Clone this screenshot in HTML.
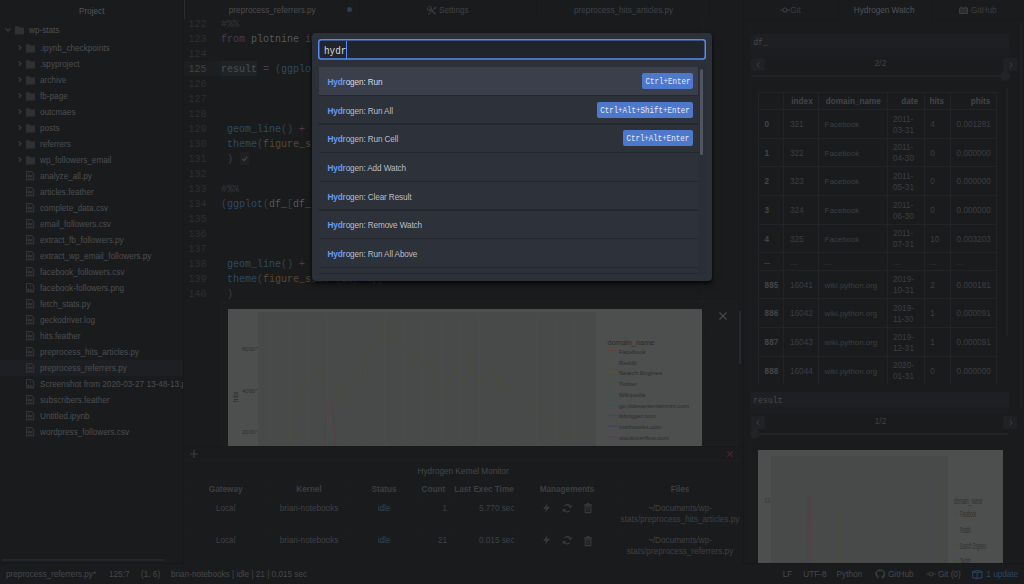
<!DOCTYPE html><html><head><meta charset="utf-8"><style>
html,body{margin:0;padding:0;width:1024px;height:584px;overflow:hidden;background:#1a1b1d;}
.t{position:absolute;white-space:pre;}
.r{position:absolute;}
svg{position:absolute;overflow:visible;}
</style></head><body>
<div class="r" style="left:0px;top:0px;width:183px;height:563px;background:#1a1b1d;"></div>
<div class="t" style="left:41.7px;width:100px;text-align:center;top:5.799999999999999px;line-height:12px;font-size:8.2px;color:#55585c;font-weight:normal;font-family:'Liberation Sans', sans-serif;">Project</div>
<div class="r" style="left:183px;top:0px;width:1px;height:563px;background:#161719;"></div>
<svg style="left:5px;top:28px" width="6" height="4"><path d="M0.5 0.5 L3 3 L5.5 0.5" stroke="#3a3c40" stroke-width="1.1" fill="none"/></svg>
<svg style="left:15px;top:25.8px" width="9" height="8.5"><path d="M0 0.3 H3.6 L4.6 1.5 H9 V8.4 H0 Z" fill="#2e3033"/></svg>
<div class="t" style="left:28.8px;top:24.200000000000003px;line-height:12px;font-size:9.347999999999999px;color:#4e5155;font-weight:normal;font-family:'Liberation Sans', sans-serif;transform:scaleX(0.877);transform-origin:0 50%;">wp-stats</div>
<svg style="left:17.6px;top:45.4px" width="4" height="6"><path d="M0.6 0.5 L3 2.8 L0.6 5.1" stroke="#3a3c40" stroke-width="1.1" fill="none"/></svg>
<svg style="left:26px;top:43.8px" width="9" height="8.5"><path d="M0 0.3 H3.6 L4.6 1.5 H9 V8.4 H0 Z" fill="#2e3033"/></svg>
<div class="t" style="left:40.2px;top:42.2px;line-height:12px;font-size:9.347999999999999px;color:#4b4e52;font-weight:normal;font-family:'Liberation Sans', sans-serif;transform:scaleX(0.877);transform-origin:0 50%;">.ipynb_checkpoints</div>
<svg style="left:17.6px;top:61.4px" width="4" height="6"><path d="M0.6 0.5 L3 2.8 L0.6 5.1" stroke="#3a3c40" stroke-width="1.1" fill="none"/></svg>
<svg style="left:26px;top:59.8px" width="9" height="8.5"><path d="M0 0.3 H3.6 L4.6 1.5 H9 V8.4 H0 Z" fill="#2e3033"/></svg>
<div class="t" style="left:40.2px;top:58.2px;line-height:12px;font-size:9.347999999999999px;color:#4b4e52;font-weight:normal;font-family:'Liberation Sans', sans-serif;transform:scaleX(0.877);transform-origin:0 50%;">.spyproject</div>
<svg style="left:17.6px;top:77.4px" width="4" height="6"><path d="M0.6 0.5 L3 2.8 L0.6 5.1" stroke="#3a3c40" stroke-width="1.1" fill="none"/></svg>
<svg style="left:26px;top:75.8px" width="9" height="8.5"><path d="M0 0.3 H3.6 L4.6 1.5 H9 V8.4 H0 Z" fill="#2e3033"/></svg>
<div class="t" style="left:40.2px;top:74.19999999999999px;line-height:12px;font-size:9.347999999999999px;color:#4b4e52;font-weight:normal;font-family:'Liberation Sans', sans-serif;transform:scaleX(0.877);transform-origin:0 50%;">archive</div>
<svg style="left:17.6px;top:93.4px" width="4" height="6"><path d="M0.6 0.5 L3 2.8 L0.6 5.1" stroke="#3a3c40" stroke-width="1.1" fill="none"/></svg>
<svg style="left:26px;top:91.8px" width="9" height="8.5"><path d="M0 0.3 H3.6 L4.6 1.5 H9 V8.4 H0 Z" fill="#2e3033"/></svg>
<div class="t" style="left:40.2px;top:90.19999999999999px;line-height:12px;font-size:9.347999999999999px;color:#4b4e52;font-weight:normal;font-family:'Liberation Sans', sans-serif;transform:scaleX(0.877);transform-origin:0 50%;">fb-page</div>
<svg style="left:17.6px;top:109.4px" width="4" height="6"><path d="M0.6 0.5 L3 2.8 L0.6 5.1" stroke="#3a3c40" stroke-width="1.1" fill="none"/></svg>
<svg style="left:26px;top:107.8px" width="9" height="8.5"><path d="M0 0.3 H3.6 L4.6 1.5 H9 V8.4 H0 Z" fill="#2e3033"/></svg>
<div class="t" style="left:40.2px;top:106.19999999999999px;line-height:12px;font-size:9.347999999999999px;color:#4b4e52;font-weight:normal;font-family:'Liberation Sans', sans-serif;transform:scaleX(0.877);transform-origin:0 50%;">outcmaes</div>
<svg style="left:17.6px;top:125.4px" width="4" height="6"><path d="M0.6 0.5 L3 2.8 L0.6 5.1" stroke="#3a3c40" stroke-width="1.1" fill="none"/></svg>
<svg style="left:26px;top:123.8px" width="9" height="8.5"><path d="M0 0.3 H3.6 L4.6 1.5 H9 V8.4 H0 Z" fill="#2e3033"/></svg>
<div class="t" style="left:40.2px;top:122.19999999999999px;line-height:12px;font-size:9.347999999999999px;color:#4b4e52;font-weight:normal;font-family:'Liberation Sans', sans-serif;transform:scaleX(0.877);transform-origin:0 50%;">posts</div>
<svg style="left:17.6px;top:141.4px" width="4" height="6"><path d="M0.6 0.5 L3 2.8 L0.6 5.1" stroke="#3a3c40" stroke-width="1.1" fill="none"/></svg>
<svg style="left:26px;top:139.8px" width="9" height="8.5"><path d="M0 0.3 H3.6 L4.6 1.5 H9 V8.4 H0 Z" fill="#2e3033"/></svg>
<div class="t" style="left:40.2px;top:138.2px;line-height:12px;font-size:9.347999999999999px;color:#4b4e52;font-weight:normal;font-family:'Liberation Sans', sans-serif;transform:scaleX(0.877);transform-origin:0 50%;">referrers</div>
<svg style="left:17.6px;top:157.4px" width="4" height="6"><path d="M0.6 0.5 L3 2.8 L0.6 5.1" stroke="#3a3c40" stroke-width="1.1" fill="none"/></svg>
<svg style="left:26px;top:155.8px" width="9" height="8.5"><path d="M0 0.3 H3.6 L4.6 1.5 H9 V8.4 H0 Z" fill="#2e3033"/></svg>
<div class="t" style="left:40.2px;top:154.2px;line-height:12px;font-size:9.347999999999999px;color:#4b4e52;font-weight:normal;font-family:'Liberation Sans', sans-serif;transform:scaleX(0.877);transform-origin:0 50%;">wp_followers_email</div>
<svg style="left:25.8px;top:171.4px" width="9" height="10"><path d="M0.55 0.55 H5.5 L7.65 2.7 V8.85 H0.55 Z" stroke="#313337" stroke-width="1.1" fill="none"/><rect x="1.4" y="1.8" width="2.8" height="0.9" fill="#313337"/><rect x="1.4" y="3.9" width="5" height="2.1" fill="#313337"/><rect x="1.4" y="6.9" width="5" height="0.8" fill="#313337"/></svg>
<div class="t" style="left:40px;top:170.2px;line-height:12px;font-size:9.347999999999999px;color:#4b4e52;font-weight:normal;font-family:'Liberation Sans', sans-serif;overflow:hidden;width:163.1px;transform:scaleX(0.877);transform-origin:0 50%;">analyze_all.py</div>
<svg style="left:25.8px;top:187.4px" width="9" height="10"><path d="M0.55 0.55 H5.5 L7.65 2.7 V8.85 H0.55 Z" stroke="#313337" stroke-width="1.1" fill="none"/><rect x="1.4" y="1.8" width="2.8" height="0.9" fill="#313337"/><rect x="1.4" y="3.9" width="5" height="2.1" fill="#313337"/><rect x="1.4" y="6.9" width="5" height="0.8" fill="#313337"/></svg>
<div class="t" style="left:40px;top:186.2px;line-height:12px;font-size:9.347999999999999px;color:#4b4e52;font-weight:normal;font-family:'Liberation Sans', sans-serif;overflow:hidden;width:163.1px;transform:scaleX(0.877);transform-origin:0 50%;">articles.feather</div>
<svg style="left:25.8px;top:203.4px" width="9" height="10"><path d="M0.55 0.55 H5.5 L7.65 2.7 V8.85 H0.55 Z" stroke="#313337" stroke-width="1.1" fill="none"/><rect x="1.4" y="1.8" width="2.8" height="0.9" fill="#313337"/><rect x="1.4" y="3.9" width="5" height="2.1" fill="#313337"/><rect x="1.4" y="6.9" width="5" height="0.8" fill="#313337"/></svg>
<div class="t" style="left:40px;top:202.2px;line-height:12px;font-size:9.347999999999999px;color:#4b4e52;font-weight:normal;font-family:'Liberation Sans', sans-serif;overflow:hidden;width:163.1px;transform:scaleX(0.877);transform-origin:0 50%;">complete_data.csv</div>
<svg style="left:25.8px;top:219.4px" width="9" height="10"><path d="M0.55 0.55 H5.5 L7.65 2.7 V8.85 H0.55 Z" stroke="#313337" stroke-width="1.1" fill="none"/><rect x="1.4" y="1.8" width="2.8" height="0.9" fill="#313337"/><rect x="1.4" y="3.9" width="5" height="2.1" fill="#313337"/><rect x="1.4" y="6.9" width="5" height="0.8" fill="#313337"/></svg>
<div class="t" style="left:40px;top:218.2px;line-height:12px;font-size:9.347999999999999px;color:#4b4e52;font-weight:normal;font-family:'Liberation Sans', sans-serif;overflow:hidden;width:163.1px;transform:scaleX(0.877);transform-origin:0 50%;">email_followers.csv</div>
<svg style="left:25.8px;top:235.4px" width="9" height="10"><path d="M0.55 0.55 H5.5 L7.65 2.7 V8.85 H0.55 Z" stroke="#313337" stroke-width="1.1" fill="none"/><rect x="1.4" y="1.8" width="2.8" height="0.9" fill="#313337"/><rect x="1.4" y="3.9" width="5" height="2.1" fill="#313337"/><rect x="1.4" y="6.9" width="5" height="0.8" fill="#313337"/></svg>
<div class="t" style="left:40px;top:234.2px;line-height:12px;font-size:9.347999999999999px;color:#4b4e52;font-weight:normal;font-family:'Liberation Sans', sans-serif;overflow:hidden;width:163.1px;transform:scaleX(0.877);transform-origin:0 50%;">extract_fb_followers.py</div>
<svg style="left:25.8px;top:251.4px" width="9" height="10"><path d="M0.55 0.55 H5.5 L7.65 2.7 V8.85 H0.55 Z" stroke="#313337" stroke-width="1.1" fill="none"/><rect x="1.4" y="1.8" width="2.8" height="0.9" fill="#313337"/><rect x="1.4" y="3.9" width="5" height="2.1" fill="#313337"/><rect x="1.4" y="6.9" width="5" height="0.8" fill="#313337"/></svg>
<div class="t" style="left:40px;top:250.2px;line-height:12px;font-size:9.347999999999999px;color:#4b4e52;font-weight:normal;font-family:'Liberation Sans', sans-serif;overflow:hidden;width:163.1px;transform:scaleX(0.877);transform-origin:0 50%;">extract_wp_email_followers.py</div>
<svg style="left:25.8px;top:267.4px" width="9" height="10"><path d="M0.55 0.55 H5.5 L7.65 2.7 V8.85 H0.55 Z" stroke="#313337" stroke-width="1.1" fill="none"/><rect x="1.4" y="1.8" width="2.8" height="0.9" fill="#313337"/><rect x="1.4" y="3.9" width="5" height="2.1" fill="#313337"/><rect x="1.4" y="6.9" width="5" height="0.8" fill="#313337"/></svg>
<div class="t" style="left:40px;top:266.20000000000005px;line-height:12px;font-size:9.347999999999999px;color:#4b4e52;font-weight:normal;font-family:'Liberation Sans', sans-serif;overflow:hidden;width:163.1px;transform:scaleX(0.877);transform-origin:0 50%;">facebook_followers.csv</div>
<svg style="left:25.8px;top:283.4px" width="9" height="10"><path d="M0.55 0.55 H5.5 L7.65 2.7 V8.85 H0.55 Z" stroke="#313337" stroke-width="1.1" fill="none"/><circle cx="4.4" cy="3.1" r="0.85" fill="#313337"/><path d="M1.1 7.6 L2.2 4.8 L3.3 6.6 L4.5 5.6 L6.9 7.6 Z" fill="#313337"/><rect x="0.6" y="7.4" width="6.8" height="1.5" fill="#313337"/></svg>
<div class="t" style="left:40px;top:282.20000000000005px;line-height:12px;font-size:9.347999999999999px;color:#4b4e52;font-weight:normal;font-family:'Liberation Sans', sans-serif;overflow:hidden;width:163.1px;transform:scaleX(0.877);transform-origin:0 50%;">facebook-followers.png</div>
<svg style="left:25.8px;top:299.4px" width="9" height="10"><path d="M0.55 0.55 H5.5 L7.65 2.7 V8.85 H0.55 Z" stroke="#313337" stroke-width="1.1" fill="none"/><rect x="1.4" y="1.8" width="2.8" height="0.9" fill="#313337"/><rect x="1.4" y="3.9" width="5" height="2.1" fill="#313337"/><rect x="1.4" y="6.9" width="5" height="0.8" fill="#313337"/></svg>
<div class="t" style="left:40px;top:298.20000000000005px;line-height:12px;font-size:9.347999999999999px;color:#4b4e52;font-weight:normal;font-family:'Liberation Sans', sans-serif;overflow:hidden;width:163.1px;transform:scaleX(0.877);transform-origin:0 50%;">fetch_stats.py</div>
<svg style="left:25.8px;top:315.4px" width="9" height="10"><path d="M0.55 0.55 H5.5 L7.65 2.7 V8.85 H0.55 Z" stroke="#313337" stroke-width="1.1" fill="none"/><rect x="1.4" y="1.8" width="2.8" height="0.9" fill="#313337"/><rect x="1.4" y="3.9" width="5" height="2.1" fill="#313337"/><rect x="1.4" y="6.9" width="5" height="0.8" fill="#313337"/></svg>
<div class="t" style="left:40px;top:314.20000000000005px;line-height:12px;font-size:9.347999999999999px;color:#4b4e52;font-weight:normal;font-family:'Liberation Sans', sans-serif;overflow:hidden;width:163.1px;transform:scaleX(0.877);transform-origin:0 50%;">geckodriver.log</div>
<svg style="left:25.8px;top:331.4px" width="9" height="10"><path d="M0.55 0.55 H5.5 L7.65 2.7 V8.85 H0.55 Z" stroke="#313337" stroke-width="1.1" fill="none"/><rect x="1.4" y="1.8" width="2.8" height="0.9" fill="#313337"/><rect x="1.4" y="3.9" width="5" height="2.1" fill="#313337"/><rect x="1.4" y="6.9" width="5" height="0.8" fill="#313337"/></svg>
<div class="t" style="left:40px;top:330.20000000000005px;line-height:12px;font-size:9.347999999999999px;color:#4b4e52;font-weight:normal;font-family:'Liberation Sans', sans-serif;overflow:hidden;width:163.1px;transform:scaleX(0.877);transform-origin:0 50%;">hits.feather</div>
<svg style="left:25.8px;top:347.4px" width="9" height="10"><path d="M0.55 0.55 H5.5 L7.65 2.7 V8.85 H0.55 Z" stroke="#313337" stroke-width="1.1" fill="none"/><rect x="1.4" y="1.8" width="2.8" height="0.9" fill="#313337"/><rect x="1.4" y="3.9" width="5" height="2.1" fill="#313337"/><rect x="1.4" y="6.9" width="5" height="0.8" fill="#313337"/></svg>
<div class="t" style="left:40px;top:346.20000000000005px;line-height:12px;font-size:9.347999999999999px;color:#4b4e52;font-weight:normal;font-family:'Liberation Sans', sans-serif;overflow:hidden;width:163.1px;transform:scaleX(0.877);transform-origin:0 50%;">preprocess_hits_articles.py</div>
<div class="r" style="left:0px;top:360px;width:183px;height:16px;background:#1e1f22;"></div>
<svg style="left:25.8px;top:363.4px" width="9" height="10"><path d="M0.55 0.55 H5.5 L7.65 2.7 V8.85 H0.55 Z" stroke="#313337" stroke-width="1.1" fill="none"/><rect x="1.4" y="1.8" width="2.8" height="0.9" fill="#313337"/><rect x="1.4" y="3.9" width="5" height="2.1" fill="#313337"/><rect x="1.4" y="6.9" width="5" height="0.8" fill="#313337"/></svg>
<div class="t" style="left:40px;top:362.20000000000005px;line-height:12px;font-size:9.347999999999999px;color:#4b4e52;font-weight:normal;font-family:'Liberation Sans', sans-serif;overflow:hidden;width:163.1px;transform:scaleX(0.877);transform-origin:0 50%;">preprocess_referrers.py</div>
<svg style="left:25.8px;top:379.4px" width="9" height="10"><path d="M0.55 0.55 H5.5 L7.65 2.7 V8.85 H0.55 Z" stroke="#313337" stroke-width="1.1" fill="none"/><circle cx="4.4" cy="3.1" r="0.85" fill="#313337"/><path d="M1.1 7.6 L2.2 4.8 L3.3 6.6 L4.5 5.6 L6.9 7.6 Z" fill="#313337"/><rect x="0.6" y="7.4" width="6.8" height="1.5" fill="#313337"/></svg>
<div class="t" style="left:40px;top:378.20000000000005px;line-height:12px;font-size:9.347999999999999px;color:#4b4e52;font-weight:normal;font-family:'Liberation Sans', sans-serif;overflow:hidden;width:163.1px;transform:scaleX(0.877);transform-origin:0 50%;">Screenshot from 2020-03-27 13-48-13.png</div>
<svg style="left:25.8px;top:395.4px" width="9" height="10"><path d="M0.55 0.55 H5.5 L7.65 2.7 V8.85 H0.55 Z" stroke="#313337" stroke-width="1.1" fill="none"/><rect x="1.4" y="1.8" width="2.8" height="0.9" fill="#313337"/><rect x="1.4" y="3.9" width="5" height="2.1" fill="#313337"/><rect x="1.4" y="6.9" width="5" height="0.8" fill="#313337"/></svg>
<div class="t" style="left:40px;top:394.20000000000005px;line-height:12px;font-size:9.347999999999999px;color:#4b4e52;font-weight:normal;font-family:'Liberation Sans', sans-serif;overflow:hidden;width:163.1px;transform:scaleX(0.877);transform-origin:0 50%;">subscribers.feather</div>
<svg style="left:25.8px;top:411.4px" width="9" height="10"><path d="M0.55 0.55 H5.5 L7.65 2.7 V8.85 H0.55 Z" stroke="#313337" stroke-width="1.1" fill="none"/><rect x="1.4" y="1.8" width="2.8" height="0.9" fill="#313337"/><rect x="1.4" y="3.9" width="5" height="2.1" fill="#313337"/><rect x="1.4" y="6.9" width="5" height="0.8" fill="#313337"/></svg>
<div class="t" style="left:40px;top:410.20000000000005px;line-height:12px;font-size:9.347999999999999px;color:#4b4e52;font-weight:normal;font-family:'Liberation Sans', sans-serif;overflow:hidden;width:163.1px;transform:scaleX(0.877);transform-origin:0 50%;">Untitled.ipynb</div>
<svg style="left:25.8px;top:427.4px" width="9" height="10"><path d="M0.55 0.55 H5.5 L7.65 2.7 V8.85 H0.55 Z" stroke="#313337" stroke-width="1.1" fill="none"/><rect x="1.4" y="1.8" width="2.8" height="0.9" fill="#313337"/><rect x="1.4" y="3.9" width="5" height="2.1" fill="#313337"/><rect x="1.4" y="6.9" width="5" height="0.8" fill="#313337"/></svg>
<div class="t" style="left:40px;top:426.20000000000005px;line-height:12px;font-size:9.347999999999999px;color:#4b4e52;font-weight:normal;font-family:'Liberation Sans', sans-serif;overflow:hidden;width:163.1px;transform:scaleX(0.877);transform-origin:0 50%;">wordpress_followers.csv</div>
<div class="r" style="left:2px;top:558.7px;width:163px;height:2.4px;background:#24272b;border-radius:1px;"></div>
<div class="r" style="left:0px;top:563px;width:1024px;height:21px;background:#1a1b1d;"></div>
<div class="r" style="left:0px;top:563px;width:1024px;height:1px;background:#161719;"></div>
<div class="t" style="left:6px;top:569.1px;line-height:12px;font-size:8.2px;color:#45484c;font-weight:normal;font-family:'Liberation Sans', sans-serif;">preprocess_referrers.py*</div>
<div class="t" style="left:109px;top:569.1px;line-height:12px;font-size:8.2px;color:#45484c;font-weight:normal;font-family:'Liberation Sans', sans-serif;">125:7</div>
<div class="t" style="left:141px;top:569.1px;line-height:12px;font-size:8.2px;color:#45484c;font-weight:normal;font-family:'Liberation Sans', sans-serif;">(1, 6)</div>
<div class="t" style="left:171px;top:569.1px;line-height:12px;font-size:8.2px;color:#45484c;font-weight:normal;font-family:'Liberation Sans', sans-serif;">brian-notebooks | idle | 21 | 0.015 sec</div>
<div class="t" style="left:782.7px;top:569.1px;line-height:12px;font-size:8.2px;color:#45484c;font-weight:normal;font-family:'Liberation Sans', sans-serif;">LF</div>
<div class="t" style="left:803.3px;top:569.1px;line-height:12px;font-size:8.2px;color:#45484c;font-weight:normal;font-family:'Liberation Sans', sans-serif;">UTF-8</div>
<div class="t" style="left:836.6px;top:569.1px;line-height:12px;font-size:8.2px;color:#45484c;font-weight:normal;font-family:'Liberation Sans', sans-serif;">Python</div>
<div class="t" style="left:888px;top:569.1px;line-height:12px;font-size:8.2px;color:#45484c;font-weight:normal;font-family:'Liberation Sans', sans-serif;">GitHub</div>
<div class="t" style="left:937.9px;top:569.1px;line-height:12px;font-size:8.2px;color:#45484c;font-weight:normal;font-family:'Liberation Sans', sans-serif;">Git (0)</div>
<div class="t" style="left:986.3px;top:569.1px;line-height:12px;font-size:8.2px;color:#2c4460;font-weight:normal;font-family:'Liberation Sans', sans-serif;">1 update</div>
<svg style="left:874.6px;top:568.8px" width="11" height="10"><path d="M5.3 0.2 C2.4 0.2 0.2 2.4 0.2 5.1 C0.2 7.3 1.6 9.2 3.6 9.8 C3.9 9.9 4 9.7 4 9.6 V8.7 C2.6 9 2.3 8 2.3 8 C2.1 7.4 1.7 7.2 1.7 7.2 C1.2 6.9 1.7 6.9 1.7 6.9 C2.2 6.9 2.5 7.4 2.5 7.4 C3 8.2 3.7 8 4 7.8 C4.1 7.5 4.2 7.2 4.4 7.1 C3.2 7 2 6.5 2 4.6 C2 4 2.2 3.6 2.5 3.2 C2.5 3.1 2.3 2.6 2.6 1.9 C2.6 1.9 3 1.8 4 2.4 C4.4 2.3 4.9 2.2 5.3 2.2 C5.7 2.2 6.2 2.3 6.6 2.4 C7.6 1.8 8 1.9 8 1.9 C8.3 2.6 8.1 3.1 8.1 3.2 C8.4 3.6 8.6 4 8.6 4.6 C8.6 6.5 7.4 7 6.2 7.1 C6.4 7.3 6.6 7.6 6.6 8.1 V9.6 C6.6 9.7 6.7 9.9 7 9.8 C9 9.2 10.4 7.3 10.4 5.1 C10.4 2.4 8.2 0.2 5.3 0.2 Z" fill="#37393d"/></svg>
<svg style="left:925.5px;top:570.6px" width="10" height="6"><circle cx="5" cy="3" r="2" stroke="#38393d" stroke-width="1.2" fill="none"/><path d="M0 3 H3 M7 3 H10" stroke="#38393d" stroke-width="1.2"/></svg>
<svg style="left:971.6px;top:569.6px" width="11" height="9"><path d="M0.6 1.6 L5.2 0.4 L10 1.6 V7.6 L5.2 8.6 L0.6 7.6 Z M0.6 1.6 L5.2 3 L10 1.6 M5.2 3 V8.6" stroke="#2a3f5a" stroke-width="1.1" fill="none"/></svg>
<div class="r" style="left:184px;top:0px;width:559px;height:19px;background:#1a1b1d;"></div>
<div class="r" style="left:359px;top:19px;width:384px;height:1px;background:#161719;"></div>
<div class="r" style="left:183.5px;top:0px;width:1.4px;height:19px;background:#2a2c30;"></div>
<div class="r" style="left:358.8px;top:0px;width:1px;height:19px;background:#17181a;"></div>
<div class="r" style="left:536px;top:0px;width:1px;height:19px;background:#17181a;"></div>
<div class="r" style="left:709px;top:0px;width:1px;height:19px;background:#17181a;"></div>
<div class="t" style="left:228.8px;top:5.4px;line-height:12px;font-size:8.2px;color:#4a4d51;font-weight:normal;font-family:'Liberation Sans', sans-serif;">preprocess_referrers.py</div>
<div class="r" style="left:347.1px;top:7.3px;width:5px;height:5px;border-radius:50%;background:#2a3f57"></div>
<svg style="left:426.7px;top:5.6px" width="10" height="9"><path d="M2.6 2.6 L8.6 8.4" stroke="#36383c" stroke-width="1.7" fill="none"/><path d="M0.6 1.6 A2 2 0 0 0 3.4 4.2 M1.6 0.6 A2 2 0 0 1 4.2 3.4" stroke="#36383c" stroke-width="1.2" fill="none"/><path d="M9.2 0.8 L1 8.4" stroke="#36383c" stroke-width="1.1" fill="none"/><path d="M7.6 0.6 L9.4 2.4 L8.2 3.2 L6.8 1.8 Z" fill="#36383c"/></svg>
<div class="t" style="left:439px;top:5.4px;line-height:12px;font-size:8.2px;color:#3f4246;font-weight:normal;font-family:'Liberation Sans', sans-serif;">Settings</div>
<div class="t" style="left:574px;top:5.4px;line-height:12px;font-size:8.2px;color:#3f4246;font-weight:normal;font-family:'Liberation Sans', sans-serif;">preprocess_hits_articles.py</div>
<div class="r" style="left:184px;top:19px;width:559px;height:427px;background:#1a1b1d;"></div>
<div class="r" style="left:184px;top:61.3px;width:37px;height:15.1px;background:#1c1e20;"></div>
<div class="r" style="left:701.5px;top:19px;width:1px;height:282px;background:#1e1f22;"></div>
<div class="t" style="left:166.5px;width:40px;text-align:right;top:17.3px;line-height:15px;font-size:10px;color:#2c2e32;font-weight:normal;font-family:'Liberation Mono', monospace;">122</div>
<div class="t" style="left:166.5px;width:40px;text-align:right;top:32.300000000000004px;line-height:15px;font-size:10px;color:#2c2e32;font-weight:normal;font-family:'Liberation Mono', monospace;">123</div>
<div class="t" style="left:166.5px;width:40px;text-align:right;top:47.300000000000004px;line-height:15px;font-size:10px;color:#2c2e32;font-weight:normal;font-family:'Liberation Mono', monospace;">124</div>
<div class="t" style="left:166.5px;width:40px;text-align:right;top:62.3px;line-height:15px;font-size:10px;color:#3f4246;font-weight:normal;font-family:'Liberation Mono', monospace;">125</div>
<div class="t" style="left:166.5px;width:40px;text-align:right;top:77.3px;line-height:15px;font-size:10px;color:#2c2e32;font-weight:normal;font-family:'Liberation Mono', monospace;">126</div>
<div class="t" style="left:166.5px;width:40px;text-align:right;top:92.3px;line-height:15px;font-size:10px;color:#2c2e32;font-weight:normal;font-family:'Liberation Mono', monospace;">127</div>
<div class="t" style="left:166.5px;width:40px;text-align:right;top:107.3px;line-height:15px;font-size:10px;color:#2c2e32;font-weight:normal;font-family:'Liberation Mono', monospace;">128</div>
<div class="t" style="left:166.5px;width:40px;text-align:right;top:122.3px;line-height:15px;font-size:10px;color:#2c2e32;font-weight:normal;font-family:'Liberation Mono', monospace;">129</div>
<div class="t" style="left:166.5px;width:40px;text-align:right;top:137.29999999999998px;line-height:15px;font-size:10px;color:#2c2e32;font-weight:normal;font-family:'Liberation Mono', monospace;">130</div>
<div class="t" style="left:166.5px;width:40px;text-align:right;top:152.29999999999998px;line-height:15px;font-size:10px;color:#2c2e32;font-weight:normal;font-family:'Liberation Mono', monospace;">131</div>
<div class="t" style="left:166.5px;width:40px;text-align:right;top:167.29999999999998px;line-height:15px;font-size:10px;color:#2c2e32;font-weight:normal;font-family:'Liberation Mono', monospace;">132</div>
<div class="t" style="left:166.5px;width:40px;text-align:right;top:182.29999999999998px;line-height:15px;font-size:10px;color:#2c2e32;font-weight:normal;font-family:'Liberation Mono', monospace;">133</div>
<div class="t" style="left:166.5px;width:40px;text-align:right;top:197.29999999999998px;line-height:15px;font-size:10px;color:#2c2e32;font-weight:normal;font-family:'Liberation Mono', monospace;">134</div>
<div class="t" style="left:166.5px;width:40px;text-align:right;top:212.29999999999998px;line-height:15px;font-size:10px;color:#2c2e32;font-weight:normal;font-family:'Liberation Mono', monospace;">135</div>
<div class="t" style="left:166.5px;width:40px;text-align:right;top:227.29999999999998px;line-height:15px;font-size:10px;color:#2c2e32;font-weight:normal;font-family:'Liberation Mono', monospace;">136</div>
<div class="t" style="left:166.5px;width:40px;text-align:right;top:242.29999999999998px;line-height:15px;font-size:10px;color:#2c2e32;font-weight:normal;font-family:'Liberation Mono', monospace;">137</div>
<div class="t" style="left:166.5px;width:40px;text-align:right;top:257.3px;line-height:15px;font-size:10px;color:#2c2e32;font-weight:normal;font-family:'Liberation Mono', monospace;">138</div>
<div class="t" style="left:166.5px;width:40px;text-align:right;top:272.3px;line-height:15px;font-size:10px;color:#2c2e32;font-weight:normal;font-family:'Liberation Mono', monospace;">139</div>
<div class="t" style="left:166.5px;width:40px;text-align:right;top:287.3px;line-height:15px;font-size:10px;color:#2c2e32;font-weight:normal;font-family:'Liberation Mono', monospace;">140</div>
<div class="t" style="left:221px;top:17.3px;line-height:15px;font-size:10px;font-family:'Liberation Mono', monospace;"><span style="color:#35373b">#%%</span></div>
<div class="t" style="left:221px;top:32.3px;line-height:15px;font-size:10px;font-family:'Liberation Mono', monospace;"><span style="color:#4b3a55">from</span><span style="color:#55585c"> plotnine </span><span style="color:#4b3a55">import</span><span style="color:#55585c"> *</span></div>
<div class="r" style="left:221px;top:61px;width:36.2px;height:15px;background:#1f2326;"></div>
<div class="t" style="left:221px;top:62.3px;line-height:15px;font-size:10px;font-family:'Liberation Mono', monospace;"><span style="color:#4a4d50">result</span><span style="color:#55585c"> </span><span style="color:#4b3a55">=</span><span style="color:#55585c"> </span><span style="color:#3d4044">(</span><span style="color:#2f4a63">ggplot</span></div>
<div class="t" style="left:221px;top:122.3px;line-height:15px;font-size:10px;font-family:'Liberation Mono', monospace;"><span style="color:#55585c"> </span><span style="color:#2f4a63">geom_line</span><span style="color:#3d4044">()</span><span style="color:#55585c"> </span><span style="color:#4b3a55">+</span></div>
<div class="t" style="left:221px;top:137.3px;line-height:15px;font-size:10px;font-family:'Liberation Mono', monospace;"><span style="color:#55585c"> </span><span style="color:#2f4a63">theme</span><span style="color:#3d4044">(</span><span style="color:#5a4630">figure_size</span></div>
<div class="t" style="left:221px;top:152.3px;line-height:15px;font-size:10px;font-family:'Liberation Mono', monospace;"><span style="color:#55585c"> </span><span style="color:#3d4044">)</span></div>
<div class="r" style="left:239.5px;top:152px;width:9px;height:13px;background:#1e2023;border-radius:1.5px;"></div>
<svg style="left:240.5px;top:155px" width="7" height="7"><path d="M1 3.8 L2.9 5.6 L6.2 1.6" stroke="#45484c" stroke-width="1.1" fill="none"/></svg>
<div class="t" style="left:221px;top:182.3px;line-height:15px;font-size:10px;font-family:'Liberation Mono', monospace;"><span style="color:#35373b">#%%</span></div>
<div class="t" style="left:221px;top:197.3px;line-height:15px;font-size:10px;font-family:'Liberation Mono', monospace;"><span style="color:#3d4044">(</span><span style="color:#2f4a63">ggplot</span><span style="color:#3d4044">(</span><span style="color:#55585c">df_</span><span style="color:#3d4044">[</span><span style="color:#55585c">df_</span><span style="color:#3d4044">.</span><span style="color:#55585c">domain_name</span></div>
<div class="t" style="left:221px;top:257.3px;line-height:15px;font-size:10px;font-family:'Liberation Mono', monospace;"><span style="color:#55585c"> </span><span style="color:#2f4a63">geom_line</span><span style="color:#3d4044">()</span><span style="color:#55585c"> </span><span style="color:#4b3a55">+</span></div>
<div class="t" style="left:221px;top:272.3px;line-height:15px;font-size:10px;font-family:'Liberation Mono', monospace;"><span style="color:#55585c"> </span><span style="color:#2f4a63">theme</span><span style="color:#3d4044">(</span><span style="color:#5a4630">figure_size</span><span style="color:#4b3a55">=</span><span style="color:#3d4044">(</span><span style="color:#5a4630">10</span><span style="color:#3d4044">,</span><span style="color:#55585c"> </span><span style="color:#5a4630">4</span><span style="color:#3d4044">))</span></div>
<div class="t" style="left:221px;top:287.3px;line-height:15px;font-size:10px;font-family:'Liberation Mono', monospace;"><span style="color:#55585c"> </span><span style="color:#3d4044">)</span></div>
<div class="r" style="left:221.4px;top:301px;width:516px;height:145px;background:#1b1c1e;box-shadow:inset 0 0 0 1px #1d1e21;"></div>
<div class="r" style="left:708.7px;top:301px;width:28.3px;height:28.7px;background:transparent;box-shadow:inset 0 0 0 1px #1d1e21;"></div>
<div class="r" style="left:708.7px;top:301px;width:1px;height:145px;background:#1d1e21;"></div>
<svg style="left:718.6px;top:312px" width="8" height="8"><path d="M0.5 0.5 L7.5 7.5 M7.5 0.5 L0.5 7.5" stroke="#45474b" stroke-width="1.2" fill="none"/></svg>
<div class="r" style="left:739px;top:310.5px;width:1.6px;height:53.5px;background:#26282c;"></div>
<div class="r" style="left:228px;top:308.5px;width:474px;height:137.5px;background:#4d4e4e;overflow:hidden">
<div class="r" style="left:30px;top:3.5px;width:337.6px;height:200px;background:#484949"></div>
<svg style="left:0;top:0" width="474" height="138"><path d="M42.5 4.5 V140" stroke="#4c4d4d" stroke-width="0.7"/><path d="M61.5 4.5 V140" stroke="#4c4d4d" stroke-width="0.7"/><path d="M80.5 4.5 V140" stroke="#4c4d4d" stroke-width="0.7"/><path d="M99.5 4.5 V140" stroke="#4c4d4d" stroke-width="0.7"/><path d="M118.5 4.5 V140" stroke="#4c4d4d" stroke-width="0.7"/><path d="M137.5 4.5 V140" stroke="#4c4d4d" stroke-width="0.7"/><path d="M156.5 4.5 V140" stroke="#4c4d4d" stroke-width="0.7"/><path d="M175.5 4.5 V140" stroke="#4c4d4d" stroke-width="0.7"/><path d="M194.5 4.5 V140" stroke="#4c4d4d" stroke-width="0.7"/><path d="M213.5 4.5 V140" stroke="#4c4d4d" stroke-width="0.7"/><path d="M232.5 4.5 V140" stroke="#4c4d4d" stroke-width="0.7"/><path d="M251.5 4.5 V140" stroke="#4c4d4d" stroke-width="0.7"/><path d="M270.5 4.5 V140" stroke="#4c4d4d" stroke-width="0.7"/><path d="M289.5 4.5 V140" stroke="#4c4d4d" stroke-width="0.7"/><path d="M308.5 4.5 V140" stroke="#4c4d4d" stroke-width="0.7"/><path d="M327.5 4.5 V140" stroke="#4c4d4d" stroke-width="0.7"/><path d="M346.5 4.5 V140" stroke="#4c4d4d" stroke-width="0.7"/><path d="M365.5 4.5 V140" stroke="#4c4d4d" stroke-width="0.7"/><path d="M30 38.7 H367.6" stroke="#4c4d4d" stroke-width="0.8"/><path d="M30 80.4 H367.6" stroke="#4c4d4d" stroke-width="0.8"/><path d="M30 122 H367.6" stroke="#4c4d4d" stroke-width="0.8"/><path d="M28 38.5 H30" stroke="#2f3030" stroke-width="0.6"/><path d="M28 80.4 H30" stroke="#2f3030" stroke-width="0.6"/><path d="M28 122 H30" stroke="#2f3030" stroke-width="0.6"/><path d="M61.7 137.4 L64.3 96.8 L66.4 95.6 L68.9 93.0 L71.5 87.1 L73.6 68.6 L75.4 67.3 L77.9 68.1 L80.0 82.7 L83.1 68.1 L85.6 67.3 L87.4 62.2 L89.5 57.5 L92.1 60.9 L94.1 68.6 L95.9 80.1 L99.8 93.0 L102.3 94.3 L104.9 95.6 L107.5 91.7 L111.9 72.4 L115.2 89.1 L118.3 96.8 L121.6 78.9 L124.2 76.3 L127.5 68.1 L130.6 64.7 L134.5 62.2 L137.8 51.9 L140.4 41.6 L143.5 45.5 L146.0 37.7 L149.1 24.9 L152.4 13.3 L155.8 37.7 L158.9 32.6 L162.0 30.0 L165.3 14.6 L168.6 24.9 L171.7 33.9 L176.9 44.2 L181.5 54.4 L185.1 50.6 L188.4 37.2 L191.0 37.2 L194.3 57.0 L197.4 52.4 L200.8 57.8 L203.8 48.0 L207.2 69.9 L210.3 71.2 L216.7 84.0 L220.0 80.1 L225.7 62.2 L229.5 60.9 L232.1 76.3 L237.0 71.2 L232.0 76.2 L234.6 72.4 L237.1 66.0 L241.5 41.6 L244.8 60.8 L247.4 66.0 L253.8 73.7 L257.7 75.7 L264.1 55.7 L270.5 81.4 L273.1 71.1 L276.9 77.5 L279.5 78.3 L283.4 84.5 L285.9 85.2 L288.5 96.8 L292.3 100.6 L296.2 98.1 L298.8 99.9 L302.6 96.3 L306.5 98.8 L308.5 108.3 L310.3 104.5 L314.2 102.4 L318.0 100.6 L321.9 108.3 L327.0 121.2 L330.9 124.5 L334.7 127.6 L337.3 125.0 L341.1 130.2 L345.0 132.2 L348.8 136.6 L351.4 137.4 L352.7 119.9" stroke="#4c4d39" stroke-width="0.85" fill="none"/><path d="M96.7 138.0 L97.7 114.8 L99.3 93.8 L101.1 92.7 L102.9 93.2 L104.4 94.8 L105.9 114.8 L107.5 138.0" stroke="#563f46" stroke-width="0.9" fill="none"/><path d="M380 41.9 H389" stroke="#6a4238" stroke-width="1.3"/><path d="M380 52.7 H389" stroke="#654c36" stroke-width="1.3"/><path d="M380 63.4 H389" stroke="#55553a" stroke-width="1.3"/><path d="M380 74.2 H389" stroke="#3f5a3c" stroke-width="1.3"/><path d="M380 84.9 H389" stroke="#385a4a" stroke-width="1.3"/><path d="M380 95.7 H389" stroke="#3a5558" stroke-width="1.3"/><path d="M380 106.5 H389" stroke="#384a62" stroke-width="1.3"/><path d="M380 117.2 H389" stroke="#4a3c62" stroke-width="1.3"/><path d="M380 128.0 H389" stroke="#5e3c5a" stroke-width="1.3"/></svg>
<div class="t" style="left:-2.6999999999999993px;width:30px;text-align:right;top:36.1px;line-height:8px;font-size:6.0px;color:#2f3030;font-weight:normal;font-family:'Liberation Sans', sans-serif;">6000</div>
<div class="t" style="left:-2.6999999999999993px;width:30px;text-align:right;top:77.99999999999997px;line-height:8px;font-size:6.0px;color:#2f3030;font-weight:normal;font-family:'Liberation Sans', sans-serif;">4000</div>
<div class="t" style="left:-2.6999999999999993px;width:30px;text-align:right;top:119.6px;line-height:8px;font-size:6.0px;color:#2f3030;font-weight:normal;font-family:'Liberation Sans', sans-serif;">2000</div>
<div class="t" style="left:-12.2px;width:40px;text-align:center;top:84.4px;line-height:8px;font-size:7px;color:#2b2c2c;font-weight:normal;font-family:'Liberation Sans', sans-serif;transform:rotate(-90deg);">hits</div>
<div class="t" style="left:379.6px;top:29.200000000000024px;line-height:9px;font-size:7.4px;color:#2a2b2b;font-weight:normal;font-family:'Liberation Sans', sans-serif;">domain_name</div>
<div class="t" style="left:391px;top:39.29999999999999px;line-height:8px;font-size:6.1px;color:#2c2d2d;font-weight:normal;font-family:'Liberation Sans', sans-serif;">Facebook</div>
<div class="t" style="left:391px;top:50.05999999999998px;line-height:8px;font-size:6.1px;color:#2c2d2d;font-weight:normal;font-family:'Liberation Sans', sans-serif;">Reddit</div>
<div class="t" style="left:391px;top:60.81999999999997px;line-height:8px;font-size:6.1px;color:#2c2d2d;font-weight:normal;font-family:'Liberation Sans', sans-serif;">Search Engines</div>
<div class="t" style="left:391px;top:71.58000000000001px;line-height:8px;font-size:6.1px;color:#2c2d2d;font-weight:normal;font-family:'Liberation Sans', sans-serif;">Twitter</div>
<div class="t" style="left:391px;top:82.34px;line-height:8px;font-size:6.1px;color:#2c2d2d;font-weight:normal;font-family:'Liberation Sans', sans-serif;">Wikipedia</div>
<div class="t" style="left:391px;top:93.1px;line-height:8px;font-size:6.1px;color:#2c2d2d;font-weight:normal;font-family:'Liberation Sans', sans-serif;">go.videoentertainmnt.com</div>
<div class="t" style="left:391px;top:103.85999999999999px;line-height:8px;font-size:6.1px;color:#2c2d2d;font-weight:normal;font-family:'Liberation Sans', sans-serif;">labrigger.com</div>
<div class="t" style="left:391px;top:114.61999999999998px;line-height:8px;font-size:6.1px;color:#2c2d2d;font-weight:normal;font-family:'Liberation Sans', sans-serif;">mathworks.com</div>
<div class="t" style="left:391px;top:125.37999999999997px;line-height:8px;font-size:6.1px;color:#2c2d2d;font-weight:normal;font-family:'Liberation Sans', sans-serif;">stackoverflow.com</div>
</div>
<div class="r" style="left:184px;top:446px;width:559px;height:117px;background:#1a1b1d;"></div>
<div class="r" style="left:184px;top:446px;width:559px;height:1px;background:#17181a;"></div>
<div class="r" style="left:184px;top:460px;width:559px;height:1px;background:#1d1e21;"></div>
<svg style="left:190px;top:449.5px" width="8" height="8"><path d="M4 0 V8 M0 4 H8" stroke="#3c3e42" stroke-width="1.1" fill="none"/></svg>
<svg style="left:726.6px;top:450.8px" width="6" height="6"><path d="M0.3 0.3 L5.7 5.7 M5.7 0.3 L0.3 5.7" stroke="#4a2224" stroke-width="1.3" fill="none"/></svg>
<div class="t" style="left:417.6px;top:465.70000000000005px;line-height:12px;font-size:8.2px;color:#45484c;font-weight:normal;font-family:'Liberation Sans', sans-serif;">Hydrogen Kernel Monitor</div>
<div class="r" style="left:183.5px;top:480.8px;width:559px;height:1px;background:#1b1c1f;"></div>
<div class="r" style="left:183.5px;top:497px;width:559px;height:1px;background:#1b1c1f;"></div>
<div class="r" style="left:183.5px;top:528.8px;width:559px;height:1px;background:#1b1c1f;"></div>
<div class="r" style="left:183.5px;top:562.8px;width:559px;height:1px;background:#1b1c1f;"></div>
<div class="r" style="left:183.5px;top:480.8px;width:1px;height:82px;background:#1b1c1f;"></div>
<div class="r" style="left:268px;top:480.8px;width:1px;height:82px;background:#1b1c1f;"></div>
<div class="r" style="left:350px;top:480.8px;width:1px;height:82px;background:#1b1c1f;"></div>
<div class="r" style="left:417.6px;top:480.8px;width:1px;height:82px;background:#1b1c1f;"></div>
<div class="r" style="left:449.2px;top:480.8px;width:1px;height:82px;background:#1b1c1f;"></div>
<div class="r" style="left:517.2px;top:480.8px;width:1px;height:82px;background:#1b1c1f;"></div>
<div class="r" style="left:617.8px;top:480.8px;width:1px;height:82px;background:#1b1c1f;"></div>
<div class="r" style="left:742.5px;top:480.8px;width:1px;height:82px;background:#1b1c1f;"></div>
<div class="t" style="left:165.7px;width:120px;text-align:center;top:484.3px;line-height:12px;font-size:8.2px;color:#3c3f43;font-weight:bold;font-family:'Liberation Sans', sans-serif;">Gateway</div>
<div class="t" style="left:249.0px;width:120px;text-align:center;top:484.3px;line-height:12px;font-size:8.2px;color:#3c3f43;font-weight:bold;font-family:'Liberation Sans', sans-serif;">Kernel</div>
<div class="t" style="left:324.0px;width:120px;text-align:center;top:484.3px;line-height:12px;font-size:8.2px;color:#3c3f43;font-weight:bold;font-family:'Liberation Sans', sans-serif;">Status</div>
<div class="t" style="left:373.4px;width:120px;text-align:center;top:484.3px;line-height:12px;font-size:8.2px;color:#3c3f43;font-weight:bold;font-family:'Liberation Sans', sans-serif;">Count</div>
<div class="t" style="left:424.0px;width:120px;text-align:center;top:484.3px;line-height:12px;font-size:8.2px;color:#3c3f43;font-weight:bold;font-family:'Liberation Sans', sans-serif;">Last Exec Time</div>
<div class="t" style="left:507.0px;width:120px;text-align:center;top:484.3px;line-height:12px;font-size:8.2px;color:#3c3f43;font-weight:bold;font-family:'Liberation Sans', sans-serif;">Managements</div>
<div class="t" style="left:620.0px;width:120px;text-align:center;top:484.3px;line-height:12px;font-size:8.2px;color:#3c3f43;font-weight:bold;font-family:'Liberation Sans', sans-serif;">Files</div>
<div class="t" style="left:185.7px;width:80px;text-align:center;top:502.5px;line-height:12px;font-size:8.2px;color:#3e4145;font-weight:normal;font-family:'Liberation Sans', sans-serif;">Local</div>
<div class="t" style="left:269.0px;width:80px;text-align:center;top:502.5px;line-height:12px;font-size:8.2px;color:#3e4145;font-weight:normal;font-family:'Liberation Sans', sans-serif;">brian-notebooks</div>
<div class="t" style="left:354.0px;width:60px;text-align:center;top:502.5px;line-height:12px;font-size:8.2px;color:#3e4145;font-weight:normal;font-family:'Liberation Sans', sans-serif;">idle</div>
<div class="t" style="left:417px;width:30px;text-align:right;top:502.5px;line-height:12px;font-size:8.2px;color:#3e4145;font-weight:normal;font-family:'Liberation Sans', sans-serif;">1</div>
<div class="t" style="left:454.5px;width:60px;text-align:right;top:502.5px;line-height:12px;font-size:8.2px;color:#3e4145;font-weight:normal;font-family:'Liberation Sans', sans-serif;">5.770 sec</div>
<div class="t" style="left:618.0px;width:124px;text-align:center;top:502.5px;line-height:12px;font-size:8.2px;color:#3e4145;font-weight:normal;font-family:'Liberation Sans', sans-serif;">~/Documents/wp-</div>
<div class="t" style="left:600.0px;width:160px;text-align:center;top:514.0px;line-height:12px;font-size:8.2px;color:#3e4145;font-weight:normal;font-family:'Liberation Sans', sans-serif;">stats/preprocess_hits_articles.py</div>
<svg style="left:542.9px;top:503.0px" width="7" height="10.5"><path d="M4.7 0 L0.2 6.1 H3.1 L1.7 10.3 L6.9 3.8 H3.9 Z" fill="#37393d"/></svg>
<svg style="left:562.8px;top:503.79999999999995px" width="9" height="9"><path d="M7.4 2.6 A3.4 3.4 0 0 0 1.6 2.2 M1 6 A3.4 3.4 0 0 0 6.8 6.6" stroke="#37393d" stroke-width="1.3" fill="none"/><path d="M8.6 0.6 V3.8 H5.4 Z M-0.2 8.2 V5 H3 Z" fill="#37393d"/></svg>
<svg style="left:583.9px;top:503.2px" width="8.5" height="10.5"><path d="M0 1.2 H8.2 V2.5 H0 Z M2.8 0 H5.4 V1.2 H2.8 Z" fill="#37393d"/><path d="M1.3 3.1 H6.9 V9.6 H1.3 Z" stroke="#37393d" stroke-width="1.2" fill="none"/><path d="M3.2 3.6 V8.6 M5 3.6 V8.6" stroke="#37393d" stroke-width="0.8"/></svg>
<div class="t" style="left:185.7px;width:80px;text-align:center;top:534.9px;line-height:12px;font-size:8.2px;color:#3e4145;font-weight:normal;font-family:'Liberation Sans', sans-serif;">Local</div>
<div class="t" style="left:269.0px;width:80px;text-align:center;top:534.9px;line-height:12px;font-size:8.2px;color:#3e4145;font-weight:normal;font-family:'Liberation Sans', sans-serif;">brian-notebooks</div>
<div class="t" style="left:354.0px;width:60px;text-align:center;top:534.9px;line-height:12px;font-size:8.2px;color:#3e4145;font-weight:normal;font-family:'Liberation Sans', sans-serif;">idle</div>
<div class="t" style="left:417px;width:30px;text-align:right;top:534.9px;line-height:12px;font-size:8.2px;color:#3e4145;font-weight:normal;font-family:'Liberation Sans', sans-serif;">21</div>
<div class="t" style="left:454.5px;width:60px;text-align:right;top:534.9px;line-height:12px;font-size:8.2px;color:#3e4145;font-weight:normal;font-family:'Liberation Sans', sans-serif;">0.015 sec</div>
<div class="t" style="left:618.0px;width:124px;text-align:center;top:534.9px;line-height:12px;font-size:8.2px;color:#3e4145;font-weight:normal;font-family:'Liberation Sans', sans-serif;">~/Documents/wp-</div>
<div class="t" style="left:600.0px;width:160px;text-align:center;top:546.4px;line-height:12px;font-size:8.2px;color:#3e4145;font-weight:normal;font-family:'Liberation Sans', sans-serif;">stats/preprocess_referrers.py</div>
<svg style="left:542.9px;top:535.4px" width="7" height="10.5"><path d="M4.7 0 L0.2 6.1 H3.1 L1.7 10.3 L6.9 3.8 H3.9 Z" fill="#37393d"/></svg>
<svg style="left:562.8px;top:536.1999999999999px" width="9" height="9"><path d="M7.4 2.6 A3.4 3.4 0 0 0 1.6 2.2 M1 6 A3.4 3.4 0 0 0 6.8 6.6" stroke="#37393d" stroke-width="1.3" fill="none"/><path d="M8.6 0.6 V3.8 H5.4 Z M-0.2 8.2 V5 H3 Z" fill="#37393d"/></svg>
<svg style="left:583.9px;top:535.5999999999999px" width="8.5" height="10.5"><path d="M0 1.2 H8.2 V2.5 H0 Z M2.8 0 H5.4 V1.2 H2.8 Z" fill="#37393d"/><path d="M1.3 3.1 H6.9 V9.6 H1.3 Z" stroke="#37393d" stroke-width="1.2" fill="none"/><path d="M3.2 3.6 V8.6 M5 3.6 V8.6" stroke="#37393d" stroke-width="0.8"/></svg>
<div class="r" style="left:743px;top:0px;width:281px;height:563px;background:#1a1b1d;"></div>
<div class="r" style="left:743px;top:0px;width:1px;height:563px;background:#161719;"></div>
<div class="r" style="left:744px;top:19px;width:280px;height:1px;background:#17181a;"></div>
<div class="r" style="left:837.5px;top:0px;width:1px;height:19px;background:#17181a;"></div>
<div class="r" style="left:931px;top:0px;width:1px;height:19px;background:#17181a;"></div>
<div class="r" style="left:838.5px;top:0px;width:92.5px;height:20px;background:#1a1b1d;"></div>
<svg style="left:779.5px;top:6.5px" width="10" height="6"><circle cx="5" cy="3" r="2" stroke="#3a3c40" stroke-width="1.1" fill="none"/><path d="M0 3 H3 M7 3 H10" stroke="#3a3c40" stroke-width="1.1"/></svg>
<div class="t" style="left:790.3px;top:5.4px;line-height:12px;font-size:8.2px;color:#3a3c40;font-weight:normal;font-family:'Liberation Sans', sans-serif;">Git</div>
<div class="t" style="left:834.2px;width:100px;text-align:center;top:5.4px;line-height:12px;font-size:8.2px;color:#505357;font-weight:normal;font-family:'Liberation Sans', sans-serif;">Hydrogen Watch</div>
<svg style="left:959px;top:5.5px" width="9" height="8"><path d="M0.5 2 H8.5 V7.5 H0.5 Z M2 2 V0.5 M7 2 V0.5" stroke="#3a3c40" stroke-width="1" fill="#2a2c30"/></svg>
<div class="t" style="left:971px;top:5.4px;line-height:12px;font-size:8.2px;color:#3a3c40;font-weight:normal;font-family:'Liberation Sans', sans-serif;">GitHub</div>
<div class="r" style="left:750px;top:20px;width:1px;height:543px;background:#1c1d20;"></div>
<div class="r" style="left:751px;top:34px;width:258px;height:22.8px;background:#1c1d20;border-radius:2px;"></div>
<div class="r" style="left:751px;top:34px;width:258px;height:13.8px;background:#1e1f22;border-radius:2px 2px 0 0;"></div>
<div class="t" style="left:753.2px;top:36.5px;line-height:12px;font-size:8.2px;color:#46494d;font-weight:normal;font-family:'Liberation Mono', monospace;">df_</div>
<div class="r" style="left:751px;top:58px;width:14px;height:12.5px;background:#202124;border-radius:2px;"></div>
<svg style="left:755.5px;top:61.5px" width="4" height="6"><path d="M3.3 0.5 L0.9 2.8 L3.3 5.1" stroke="#3e4044" stroke-width="1" fill="none"/></svg>
<div class="r" style="left:1003px;top:58px;width:14px;height:12.5px;background:#202124;border-radius:2px;"></div>
<svg style="left:1008.5px;top:61.5px" width="4" height="6"><path d="M0.7 0.5 L3.1 2.8 L0.7 5.1" stroke="#3e4044" stroke-width="1" fill="none"/></svg>
<div class="t" style="left:860.5px;width:40px;text-align:center;top:58.2px;line-height:12px;font-size:8.2px;color:#3f4246;font-weight:normal;font-family:'Liberation Sans', sans-serif;">2/2</div>
<div class="r" style="left:751px;top:75px;width:258px;height:2.2px;background:#222326;border-radius:1px;"></div>
<div class="r" style="left:999.5px;top:71px;width:10px;height:10px;border-radius:50%;background:#222326"></div>
<div class="r" style="left:758px;top:92px;width:239px;height:1px;background:#222326;"></div>
<div class="r" style="left:758px;top:109px;width:239px;height:1px;background:#222326;"></div>
<div class="r" style="left:758px;top:138px;width:239px;height:1px;background:#222326;"></div>
<div class="r" style="left:758px;top:166px;width:239px;height:1px;background:#222326;"></div>
<div class="r" style="left:758px;top:195px;width:239px;height:1px;background:#222326;"></div>
<div class="r" style="left:758px;top:224px;width:239px;height:1px;background:#222326;"></div>
<div class="r" style="left:758px;top:252px;width:239px;height:1px;background:#222326;"></div>
<div class="r" style="left:758px;top:270px;width:239px;height:1px;background:#222326;"></div>
<div class="r" style="left:758px;top:298px;width:239px;height:1px;background:#222326;"></div>
<div class="r" style="left:758px;top:327px;width:239px;height:1px;background:#222326;"></div>
<div class="r" style="left:758px;top:356px;width:239px;height:1px;background:#222326;"></div>
<div class="r" style="left:758px;top:92px;width:1px;height:291.5px;background:#222326;"></div>
<div class="r" style="left:783px;top:92px;width:1px;height:291.5px;background:#222326;"></div>
<div class="r" style="left:818px;top:92px;width:1px;height:291.5px;background:#222326;"></div>
<div class="r" style="left:887px;top:92px;width:1px;height:291.5px;background:#222326;"></div>
<div class="r" style="left:924px;top:92px;width:1px;height:291.5px;background:#222326;"></div>
<div class="r" style="left:950px;top:92px;width:1px;height:291.5px;background:#222326;"></div>
<div class="r" style="left:996px;top:92px;width:1px;height:291.5px;background:#222326;"></div>
<div class="t" style="left:732.7px;width:80px;text-align:right;top:95.8px;line-height:12px;font-size:8.2px;color:#43464a;font-weight:bold;font-family:'Liberation Sans', sans-serif;">index</div>
<div class="t" style="left:800.9px;width:80px;text-align:right;top:95.8px;line-height:12px;font-size:8.2px;color:#43464a;font-weight:bold;font-family:'Liberation Sans', sans-serif;">domain_name</div>
<div class="t" style="left:838px;width:80px;text-align:right;top:95.8px;line-height:12px;font-size:8.2px;color:#43464a;font-weight:bold;font-family:'Liberation Sans', sans-serif;">date</div>
<div class="t" style="left:864px;width:80px;text-align:right;top:95.8px;line-height:12px;font-size:8.2px;color:#43464a;font-weight:bold;font-family:'Liberation Sans', sans-serif;">hits</div>
<div class="t" style="left:910.4px;width:80px;text-align:right;top:95.8px;line-height:12px;font-size:8.2px;color:#43464a;font-weight:bold;font-family:'Liberation Sans', sans-serif;">phits</div>
<div class="t" style="left:764.6px;top:119.1px;line-height:12px;font-size:8.2px;color:#43464a;font-weight:bold;font-family:'Liberation Sans', sans-serif;">0</div>
<div class="t" style="left:790px;top:119.1px;line-height:12px;font-size:8.2px;color:#3b3e42;font-weight:normal;font-family:'Liberation Sans', sans-serif;">321</div>
<div class="t" style="left:824.6px;top:119.1px;line-height:12px;font-size:7.9px;color:#3b3e42;font-weight:normal;font-family:'Liberation Sans', sans-serif;">Facebook</div>
<div class="t" style="left:893px;top:113.6px;line-height:12px;font-size:8.2px;color:#3b3e42;font-weight:normal;font-family:'Liberation Sans', sans-serif;">2011-</div>
<div class="t" style="left:893px;top:124.6px;line-height:12px;font-size:8.2px;color:#3b3e42;font-weight:normal;font-family:'Liberation Sans', sans-serif;">03-31</div>
<div class="t" style="left:930.3px;top:119.1px;line-height:12px;font-size:8.2px;color:#3b3e42;font-weight:normal;font-family:'Liberation Sans', sans-serif;">4</div>
<div class="t" style="left:956.6px;top:119.1px;line-height:12px;font-size:8.2px;color:#3b3e42;font-weight:normal;font-family:'Liberation Sans', sans-serif;">0.001281</div>
<div class="t" style="left:764.6px;top:147.6px;line-height:12px;font-size:8.2px;color:#43464a;font-weight:bold;font-family:'Liberation Sans', sans-serif;">1</div>
<div class="t" style="left:790px;top:147.6px;line-height:12px;font-size:8.2px;color:#3b3e42;font-weight:normal;font-family:'Liberation Sans', sans-serif;">322</div>
<div class="t" style="left:824.6px;top:147.6px;line-height:12px;font-size:7.9px;color:#3b3e42;font-weight:normal;font-family:'Liberation Sans', sans-serif;">Facebook</div>
<div class="t" style="left:893px;top:142.1px;line-height:12px;font-size:8.2px;color:#3b3e42;font-weight:normal;font-family:'Liberation Sans', sans-serif;">2011-</div>
<div class="t" style="left:893px;top:153.1px;line-height:12px;font-size:8.2px;color:#3b3e42;font-weight:normal;font-family:'Liberation Sans', sans-serif;">04-30</div>
<div class="t" style="left:930.3px;top:147.6px;line-height:12px;font-size:8.2px;color:#3b3e42;font-weight:normal;font-family:'Liberation Sans', sans-serif;">0</div>
<div class="t" style="left:956.6px;top:147.6px;line-height:12px;font-size:8.2px;color:#3b3e42;font-weight:normal;font-family:'Liberation Sans', sans-serif;">0.000000</div>
<div class="t" style="left:764.6px;top:176.1px;line-height:12px;font-size:8.2px;color:#43464a;font-weight:bold;font-family:'Liberation Sans', sans-serif;">2</div>
<div class="t" style="left:790px;top:176.1px;line-height:12px;font-size:8.2px;color:#3b3e42;font-weight:normal;font-family:'Liberation Sans', sans-serif;">323</div>
<div class="t" style="left:824.6px;top:176.1px;line-height:12px;font-size:7.9px;color:#3b3e42;font-weight:normal;font-family:'Liberation Sans', sans-serif;">Facebook</div>
<div class="t" style="left:893px;top:170.6px;line-height:12px;font-size:8.2px;color:#3b3e42;font-weight:normal;font-family:'Liberation Sans', sans-serif;">2011-</div>
<div class="t" style="left:893px;top:181.6px;line-height:12px;font-size:8.2px;color:#3b3e42;font-weight:normal;font-family:'Liberation Sans', sans-serif;">05-31</div>
<div class="t" style="left:930.3px;top:176.1px;line-height:12px;font-size:8.2px;color:#3b3e42;font-weight:normal;font-family:'Liberation Sans', sans-serif;">0</div>
<div class="t" style="left:956.6px;top:176.1px;line-height:12px;font-size:8.2px;color:#3b3e42;font-weight:normal;font-family:'Liberation Sans', sans-serif;">0.000000</div>
<div class="t" style="left:764.6px;top:205.1px;line-height:12px;font-size:8.2px;color:#43464a;font-weight:bold;font-family:'Liberation Sans', sans-serif;">3</div>
<div class="t" style="left:790px;top:205.1px;line-height:12px;font-size:8.2px;color:#3b3e42;font-weight:normal;font-family:'Liberation Sans', sans-serif;">324</div>
<div class="t" style="left:824.6px;top:205.1px;line-height:12px;font-size:7.9px;color:#3b3e42;font-weight:normal;font-family:'Liberation Sans', sans-serif;">Facebook</div>
<div class="t" style="left:893px;top:199.6px;line-height:12px;font-size:8.2px;color:#3b3e42;font-weight:normal;font-family:'Liberation Sans', sans-serif;">2011-</div>
<div class="t" style="left:893px;top:210.6px;line-height:12px;font-size:8.2px;color:#3b3e42;font-weight:normal;font-family:'Liberation Sans', sans-serif;">06-30</div>
<div class="t" style="left:930.3px;top:205.1px;line-height:12px;font-size:8.2px;color:#3b3e42;font-weight:normal;font-family:'Liberation Sans', sans-serif;">0</div>
<div class="t" style="left:956.6px;top:205.1px;line-height:12px;font-size:8.2px;color:#3b3e42;font-weight:normal;font-family:'Liberation Sans', sans-serif;">0.000000</div>
<div class="t" style="left:764.6px;top:233.6px;line-height:12px;font-size:8.2px;color:#43464a;font-weight:bold;font-family:'Liberation Sans', sans-serif;">4</div>
<div class="t" style="left:790px;top:233.6px;line-height:12px;font-size:8.2px;color:#3b3e42;font-weight:normal;font-family:'Liberation Sans', sans-serif;">325</div>
<div class="t" style="left:824.6px;top:233.6px;line-height:12px;font-size:7.9px;color:#3b3e42;font-weight:normal;font-family:'Liberation Sans', sans-serif;">Facebook</div>
<div class="t" style="left:893px;top:228.1px;line-height:12px;font-size:8.2px;color:#3b3e42;font-weight:normal;font-family:'Liberation Sans', sans-serif;">2011-</div>
<div class="t" style="left:893px;top:239.1px;line-height:12px;font-size:8.2px;color:#3b3e42;font-weight:normal;font-family:'Liberation Sans', sans-serif;">07-31</div>
<div class="t" style="left:930.3px;top:233.6px;line-height:12px;font-size:8.2px;color:#3b3e42;font-weight:normal;font-family:'Liberation Sans', sans-serif;">10</div>
<div class="t" style="left:956.6px;top:233.6px;line-height:12px;font-size:8.2px;color:#3b3e42;font-weight:normal;font-family:'Liberation Sans', sans-serif;">0.003203</div>
<div class="r" style="left:764.2px;top:263.2px;width:5.8px;height:1.1px;background:#36383c;"></div>
<div class="t" style="left:790px;top:256.6px;line-height:12px;font-size:8.2px;color:#38393d;font-weight:normal;font-family:'Liberation Sans', sans-serif;">...</div>
<div class="t" style="left:824.6px;top:256.6px;line-height:12px;font-size:8.2px;color:#38393d;font-weight:normal;font-family:'Liberation Sans', sans-serif;">...</div>
<div class="t" style="left:893px;top:256.6px;line-height:12px;font-size:8.2px;color:#38393d;font-weight:normal;font-family:'Liberation Sans', sans-serif;">...</div>
<div class="t" style="left:930px;top:256.6px;line-height:12px;font-size:8.2px;color:#38393d;font-weight:normal;font-family:'Liberation Sans', sans-serif;">...</div>
<div class="t" style="left:956.6px;top:256.6px;line-height:12px;font-size:8.2px;color:#38393d;font-weight:normal;font-family:'Liberation Sans', sans-serif;">...</div>
<div class="t" style="left:764.6px;top:279.6px;line-height:12px;font-size:8.2px;color:#43464a;font-weight:bold;font-family:'Liberation Sans', sans-serif;">885</div>
<div class="t" style="left:790px;top:279.6px;line-height:12px;font-size:8.2px;color:#3b3e42;font-weight:normal;font-family:'Liberation Sans', sans-serif;">16041</div>
<div class="t" style="left:824.6px;top:279.6px;line-height:12px;font-size:7.9px;color:#3b3e42;font-weight:normal;font-family:'Liberation Sans', sans-serif;">wiki.python.org</div>
<div class="t" style="left:893px;top:274.1px;line-height:12px;font-size:8.2px;color:#3b3e42;font-weight:normal;font-family:'Liberation Sans', sans-serif;">2019-</div>
<div class="t" style="left:893px;top:285.1px;line-height:12px;font-size:8.2px;color:#3b3e42;font-weight:normal;font-family:'Liberation Sans', sans-serif;">10-31</div>
<div class="t" style="left:930.3px;top:279.6px;line-height:12px;font-size:8.2px;color:#3b3e42;font-weight:normal;font-family:'Liberation Sans', sans-serif;">2</div>
<div class="t" style="left:956.6px;top:279.6px;line-height:12px;font-size:8.2px;color:#3b3e42;font-weight:normal;font-family:'Liberation Sans', sans-serif;">0.000181</div>
<div class="t" style="left:764.6px;top:308.1px;line-height:12px;font-size:8.2px;color:#43464a;font-weight:bold;font-family:'Liberation Sans', sans-serif;">886</div>
<div class="t" style="left:790px;top:308.1px;line-height:12px;font-size:8.2px;color:#3b3e42;font-weight:normal;font-family:'Liberation Sans', sans-serif;">16042</div>
<div class="t" style="left:824.6px;top:308.1px;line-height:12px;font-size:7.9px;color:#3b3e42;font-weight:normal;font-family:'Liberation Sans', sans-serif;">wiki.python.org</div>
<div class="t" style="left:893px;top:302.6px;line-height:12px;font-size:8.2px;color:#3b3e42;font-weight:normal;font-family:'Liberation Sans', sans-serif;">2019-</div>
<div class="t" style="left:893px;top:313.6px;line-height:12px;font-size:8.2px;color:#3b3e42;font-weight:normal;font-family:'Liberation Sans', sans-serif;">11-30</div>
<div class="t" style="left:930.3px;top:308.1px;line-height:12px;font-size:8.2px;color:#3b3e42;font-weight:normal;font-family:'Liberation Sans', sans-serif;">1</div>
<div class="t" style="left:956.6px;top:308.1px;line-height:12px;font-size:8.2px;color:#3b3e42;font-weight:normal;font-family:'Liberation Sans', sans-serif;">0.000091</div>
<div class="t" style="left:764.6px;top:337.1px;line-height:12px;font-size:8.2px;color:#43464a;font-weight:bold;font-family:'Liberation Sans', sans-serif;">887</div>
<div class="t" style="left:790px;top:337.1px;line-height:12px;font-size:8.2px;color:#3b3e42;font-weight:normal;font-family:'Liberation Sans', sans-serif;">16043</div>
<div class="t" style="left:824.6px;top:337.1px;line-height:12px;font-size:7.9px;color:#3b3e42;font-weight:normal;font-family:'Liberation Sans', sans-serif;">wiki.python.org</div>
<div class="t" style="left:893px;top:331.6px;line-height:12px;font-size:8.2px;color:#3b3e42;font-weight:normal;font-family:'Liberation Sans', sans-serif;">2019-</div>
<div class="t" style="left:893px;top:342.6px;line-height:12px;font-size:8.2px;color:#3b3e42;font-weight:normal;font-family:'Liberation Sans', sans-serif;">12-31</div>
<div class="t" style="left:930.3px;top:337.1px;line-height:12px;font-size:8.2px;color:#3b3e42;font-weight:normal;font-family:'Liberation Sans', sans-serif;">1</div>
<div class="t" style="left:956.6px;top:337.1px;line-height:12px;font-size:8.2px;color:#3b3e42;font-weight:normal;font-family:'Liberation Sans', sans-serif;">0.000091</div>
<div class="t" style="left:764.6px;top:365.85px;line-height:12px;font-size:8.2px;color:#43464a;font-weight:bold;font-family:'Liberation Sans', sans-serif;">888</div>
<div class="t" style="left:790px;top:365.85px;line-height:12px;font-size:8.2px;color:#3b3e42;font-weight:normal;font-family:'Liberation Sans', sans-serif;">16044</div>
<div class="t" style="left:824.6px;top:365.85px;line-height:12px;font-size:7.9px;color:#3b3e42;font-weight:normal;font-family:'Liberation Sans', sans-serif;">wiki.python.org</div>
<div class="t" style="left:893px;top:360.35px;line-height:12px;font-size:8.2px;color:#3b3e42;font-weight:normal;font-family:'Liberation Sans', sans-serif;">2020-</div>
<div class="t" style="left:893px;top:371.35px;line-height:12px;font-size:8.2px;color:#3b3e42;font-weight:normal;font-family:'Liberation Sans', sans-serif;">01-31</div>
<div class="t" style="left:930.3px;top:365.85px;line-height:12px;font-size:8.2px;color:#3b3e42;font-weight:normal;font-family:'Liberation Sans', sans-serif;">0</div>
<div class="t" style="left:956.6px;top:365.85px;line-height:12px;font-size:8.2px;color:#3b3e42;font-weight:normal;font-family:'Liberation Sans', sans-serif;">0.000000</div>
<div class="r" style="left:1005.5px;top:88px;width:2px;height:248px;background:#202124;border-radius:1px;"></div>
<div class="r" style="left:1020px;top:22px;width:2px;height:387px;background:#1f2023;border-radius:1px;"></div>
<div class="r" style="left:751px;top:391.5px;width:258px;height:22.8px;background:#1c1d20;border-radius:2px;"></div>
<div class="r" style="left:751px;top:391.5px;width:258px;height:13.8px;background:#1e1f22;border-radius:2px 2px 0 0;"></div>
<div class="t" style="left:753.2px;top:394.5px;line-height:12px;font-size:8.2px;color:#46494d;font-weight:normal;font-family:'Liberation Mono', monospace;">result</div>
<div class="r" style="left:751px;top:416px;width:14px;height:12.5px;background:#202124;border-radius:2px;"></div>
<svg style="left:755.5px;top:419.5px" width="4" height="6"><path d="M3.3 0.5 L0.9 2.8 L3.3 5.1" stroke="#3e4044" stroke-width="1" fill="none"/></svg>
<div class="r" style="left:1003px;top:416px;width:14px;height:12.5px;background:#202124;border-radius:2px;"></div>
<svg style="left:1008.5px;top:419.5px" width="4" height="6"><path d="M0.7 0.5 L3.1 2.8 L0.7 5.1" stroke="#3e4044" stroke-width="1" fill="none"/></svg>
<div class="t" style="left:860.5px;width:40px;text-align:center;top:416.0px;line-height:12px;font-size:8.2px;color:#3f4246;font-weight:normal;font-family:'Liberation Sans', sans-serif;">1/2</div>
<div class="r" style="left:751px;top:433px;width:258px;height:2.2px;background:#222326;border-radius:1px;"></div>
<div class="r" style="left:750px;top:429px;width:10px;height:10px;border-radius:50%;background:#222326"></div>
<div class="r" style="left:757.6px;top:450.2px;width:245.6px;height:113px;background:#4d4e4e;overflow:hidden">
<div class="r" style="left:13.2px;top:5.5px;width:176.8px;height:120px;background:#484949"></div>
<svg style="left:0;top:0" width="246" height="113"><path d="M49.9 113 V50 L50.9 44 L52 46 L53 113" stroke="#563f46" stroke-width="0.8" fill="none"/><path d="M82.4 113 V62 M102.4 113 V104 M181.9 113 V18" stroke="#4f4f3a" stroke-width="0.7" fill="none"/><path d="M196 63.4 H201" stroke="#5a4640" stroke-width="1"/><path d="M196 79.1 H201" stroke="#5a4c3f" stroke-width="1"/><path d="M196 94.8 H201" stroke="#4f4f3a" stroke-width="1"/><path d="M196 110.5 H201" stroke="#3f5040" stroke-width="1"/></svg>
<div class="t" style="left:196px;top:45.9px;line-height:10px;font-size:9.5px;color:#2e2f2f;font-weight:normal;font-family:'Liberation Sans', sans-serif;transform:scaleX(0.47);transform-origin:0 50%;">domain_name</div>
<div class="t" style="left:202px;top:60.0px;line-height:10px;font-size:8.2px;color:#2e2f2f;font-weight:normal;font-family:'Liberation Sans', sans-serif;transform:scaleX(0.45);transform-origin:0 50%;">Facebook</div>
<div class="t" style="left:202px;top:75.69999999999999px;line-height:10px;font-size:8.2px;color:#2e2f2f;font-weight:normal;font-family:'Liberation Sans', sans-serif;transform:scaleX(0.45);transform-origin:0 50%;">Reddit</div>
<div class="t" style="left:202px;top:91.39999999999999px;line-height:10px;font-size:8.2px;color:#2e2f2f;font-weight:normal;font-family:'Liberation Sans', sans-serif;transform:scaleX(0.45);transform-origin:0 50%;">Search Engines</div>
<div class="t" style="left:202px;top:107.1px;line-height:10px;font-size:8.2px;color:#2e2f2f;font-weight:normal;font-family:'Liberation Sans', sans-serif;transform:scaleX(0.45);transform-origin:0 50%;">Twitter</div>
<div class="t" style="left:-7px;width:20px;text-align:right;top:47.1px;line-height:8px;font-size:7px;color:#2e2f2f;font-weight:normal;font-family:'Liberation Sans', sans-serif;transform:scaleX(0.5);transform-origin:100% 50%;">0.3-</div>
</div>
<div class="r" style="left:312px;top:33px;width:399.5px;height:248px;background:#2c3039;border-radius:4px;box-shadow:0 2px 3px rgba(0,0,0,0.65), 0 4px 10px rgba(0,0,0,0.3);"></div>
<svg style="left:318px;top:39.4px" width="388" height="21"><rect x="0.75" y="0.75" width="386.5" height="19.3" rx="2.5" fill="#21252b" stroke="#568af2" stroke-width="1.5"/></svg>
<div class="t" style="left:323.6px;top:45.5px;line-height:12px;font-size:10.2px;color:#d7dae0;font-weight:normal;font-family:'Liberation Mono', monospace;transform:scaleX(0.91);transform-origin:0 50%;">hydr</div>
<div class="r" style="left:346px;top:40.6px;width:1.2px;height:18.6px;background:#528bff;"></div>
<div class="r" style="left:319px;top:66.7px;width:386.6px;height:207.5px;background:#24272d;"></div>
<div class="r" style="left:698.3px;top:66.7px;width:7.3px;height:207.5px;background:#2a2e36;"></div>
<div class="r" style="left:700.1px;top:69px;width:3px;height:86px;background:#50555f;border-radius:1.5px;"></div>
<div class="r" style="left:319px;top:66.7px;width:379.3px;height:28.67px;background:#3a3f4b;"></div>
<div class="t" style="left:327.5px;top:76.89999999999999px;line-height:12px;font-size:8.2px;color:#d7dae0;font-weight:normal;font-family:'Liberation Sans', sans-serif;letter-spacing:-0.12px;"><b style="color:#6a9bf4">Hydr</b>ogen: Run</div>
<div class="t" style="left:642.0px;top:73.0px;width:51.3px;height:16px;background:#4d78cc;border-radius:2px;"></div>
<div class="t" style="left:607.65px;top:73.9px;width:120px;height:16px;line-height:16px;display:flex;justify-content:center;font-family:'Liberation Mono', monospace;font-size:9px;color:#e8edf7;"><span style="display:inline-block;transform:scaleX(0.83)">Ctrl+Enter</span></div>
<div class="r" style="left:319px;top:95.37px;width:379.3px;height:28.67px;background:#2d3139;"></div>
<div class="r" style="left:319px;top:94.77000000000001px;width:379.3px;height:1.3px;background:#24272d;"></div>
<div class="t" style="left:327.5px;top:105.57px;line-height:12px;font-size:8.2px;color:#b9bec8;font-weight:normal;font-family:'Liberation Sans', sans-serif;letter-spacing:-0.12px;"><b style="color:#6a9bf4">Hydr</b>ogen: Run All</div>
<div class="t" style="left:596.5px;top:101.67px;width:96.8px;height:16px;background:#4d78cc;border-radius:2px;"></div>
<div class="t" style="left:584.9px;top:102.57000000000001px;width:120px;height:16px;line-height:16px;display:flex;justify-content:center;font-family:'Liberation Mono', monospace;font-size:9px;color:#e8edf7;"><span style="display:inline-block;transform:scaleX(0.83)">Ctrl+Alt+Shift+Enter</span></div>
<div class="r" style="left:319px;top:124.04px;width:379.3px;height:28.67px;background:#2d3139;"></div>
<div class="r" style="left:319px;top:123.44000000000001px;width:379.3px;height:1.3px;background:#24272d;"></div>
<div class="t" style="left:327.5px;top:134.24px;line-height:12px;font-size:8.2px;color:#b9bec8;font-weight:normal;font-family:'Liberation Sans', sans-serif;letter-spacing:-0.12px;"><b style="color:#6a9bf4">Hydr</b>ogen: Run Cell</div>
<div class="t" style="left:622.6999999999999px;top:130.34px;width:70.6px;height:16px;background:#4d78cc;border-radius:2px;"></div>
<div class="t" style="left:598.0px;top:131.24px;width:120px;height:16px;line-height:16px;display:flex;justify-content:center;font-family:'Liberation Mono', monospace;font-size:9px;color:#e8edf7;"><span style="display:inline-block;transform:scaleX(0.83)">Ctrl+Alt+Enter</span></div>
<div class="r" style="left:319px;top:152.71px;width:379.3px;height:28.67px;background:#2d3139;"></div>
<div class="r" style="left:319px;top:152.11px;width:379.3px;height:1.3px;background:#24272d;"></div>
<div class="t" style="left:327.5px;top:162.91px;line-height:12px;font-size:8.2px;color:#b9bec8;font-weight:normal;font-family:'Liberation Sans', sans-serif;letter-spacing:-0.12px;"><b style="color:#6a9bf4">Hydr</b>ogen: Add Watch</div>
<div class="r" style="left:319px;top:181.38px;width:379.3px;height:28.67px;background:#2d3139;"></div>
<div class="r" style="left:319px;top:180.78px;width:379.3px;height:1.3px;background:#24272d;"></div>
<div class="t" style="left:327.5px;top:191.57999999999998px;line-height:12px;font-size:8.2px;color:#b9bec8;font-weight:normal;font-family:'Liberation Sans', sans-serif;letter-spacing:-0.12px;"><b style="color:#6a9bf4">Hydr</b>ogen: Clear Result</div>
<div class="r" style="left:319px;top:210.05px;width:379.3px;height:28.67px;background:#2d3139;"></div>
<div class="r" style="left:319px;top:209.45000000000002px;width:379.3px;height:1.3px;background:#24272d;"></div>
<div class="t" style="left:327.5px;top:220.25px;line-height:12px;font-size:8.2px;color:#b9bec8;font-weight:normal;font-family:'Liberation Sans', sans-serif;letter-spacing:-0.12px;"><b style="color:#6a9bf4">Hydr</b>ogen: Remove Watch</div>
<div class="r" style="left:319px;top:238.72000000000003px;width:379.3px;height:28.67px;background:#2d3139;"></div>
<div class="r" style="left:319px;top:238.12000000000003px;width:379.3px;height:1.3px;background:#24272d;"></div>
<div class="t" style="left:327.5px;top:248.92000000000002px;line-height:12px;font-size:8.2px;color:#b9bec8;font-weight:normal;font-family:'Liberation Sans', sans-serif;letter-spacing:-0.12px;"><b style="color:#6a9bf4">Hydr</b>ogen: Run All Above</div>
<div class="r" style="left:319px;top:267.39px;width:379.3px;height:5.810000000000002px;background:#2d3139;"></div>
<div class="r" style="left:319px;top:266.78999999999996px;width:379.3px;height:1.3px;background:#24272d;"></div>
</body></html>
